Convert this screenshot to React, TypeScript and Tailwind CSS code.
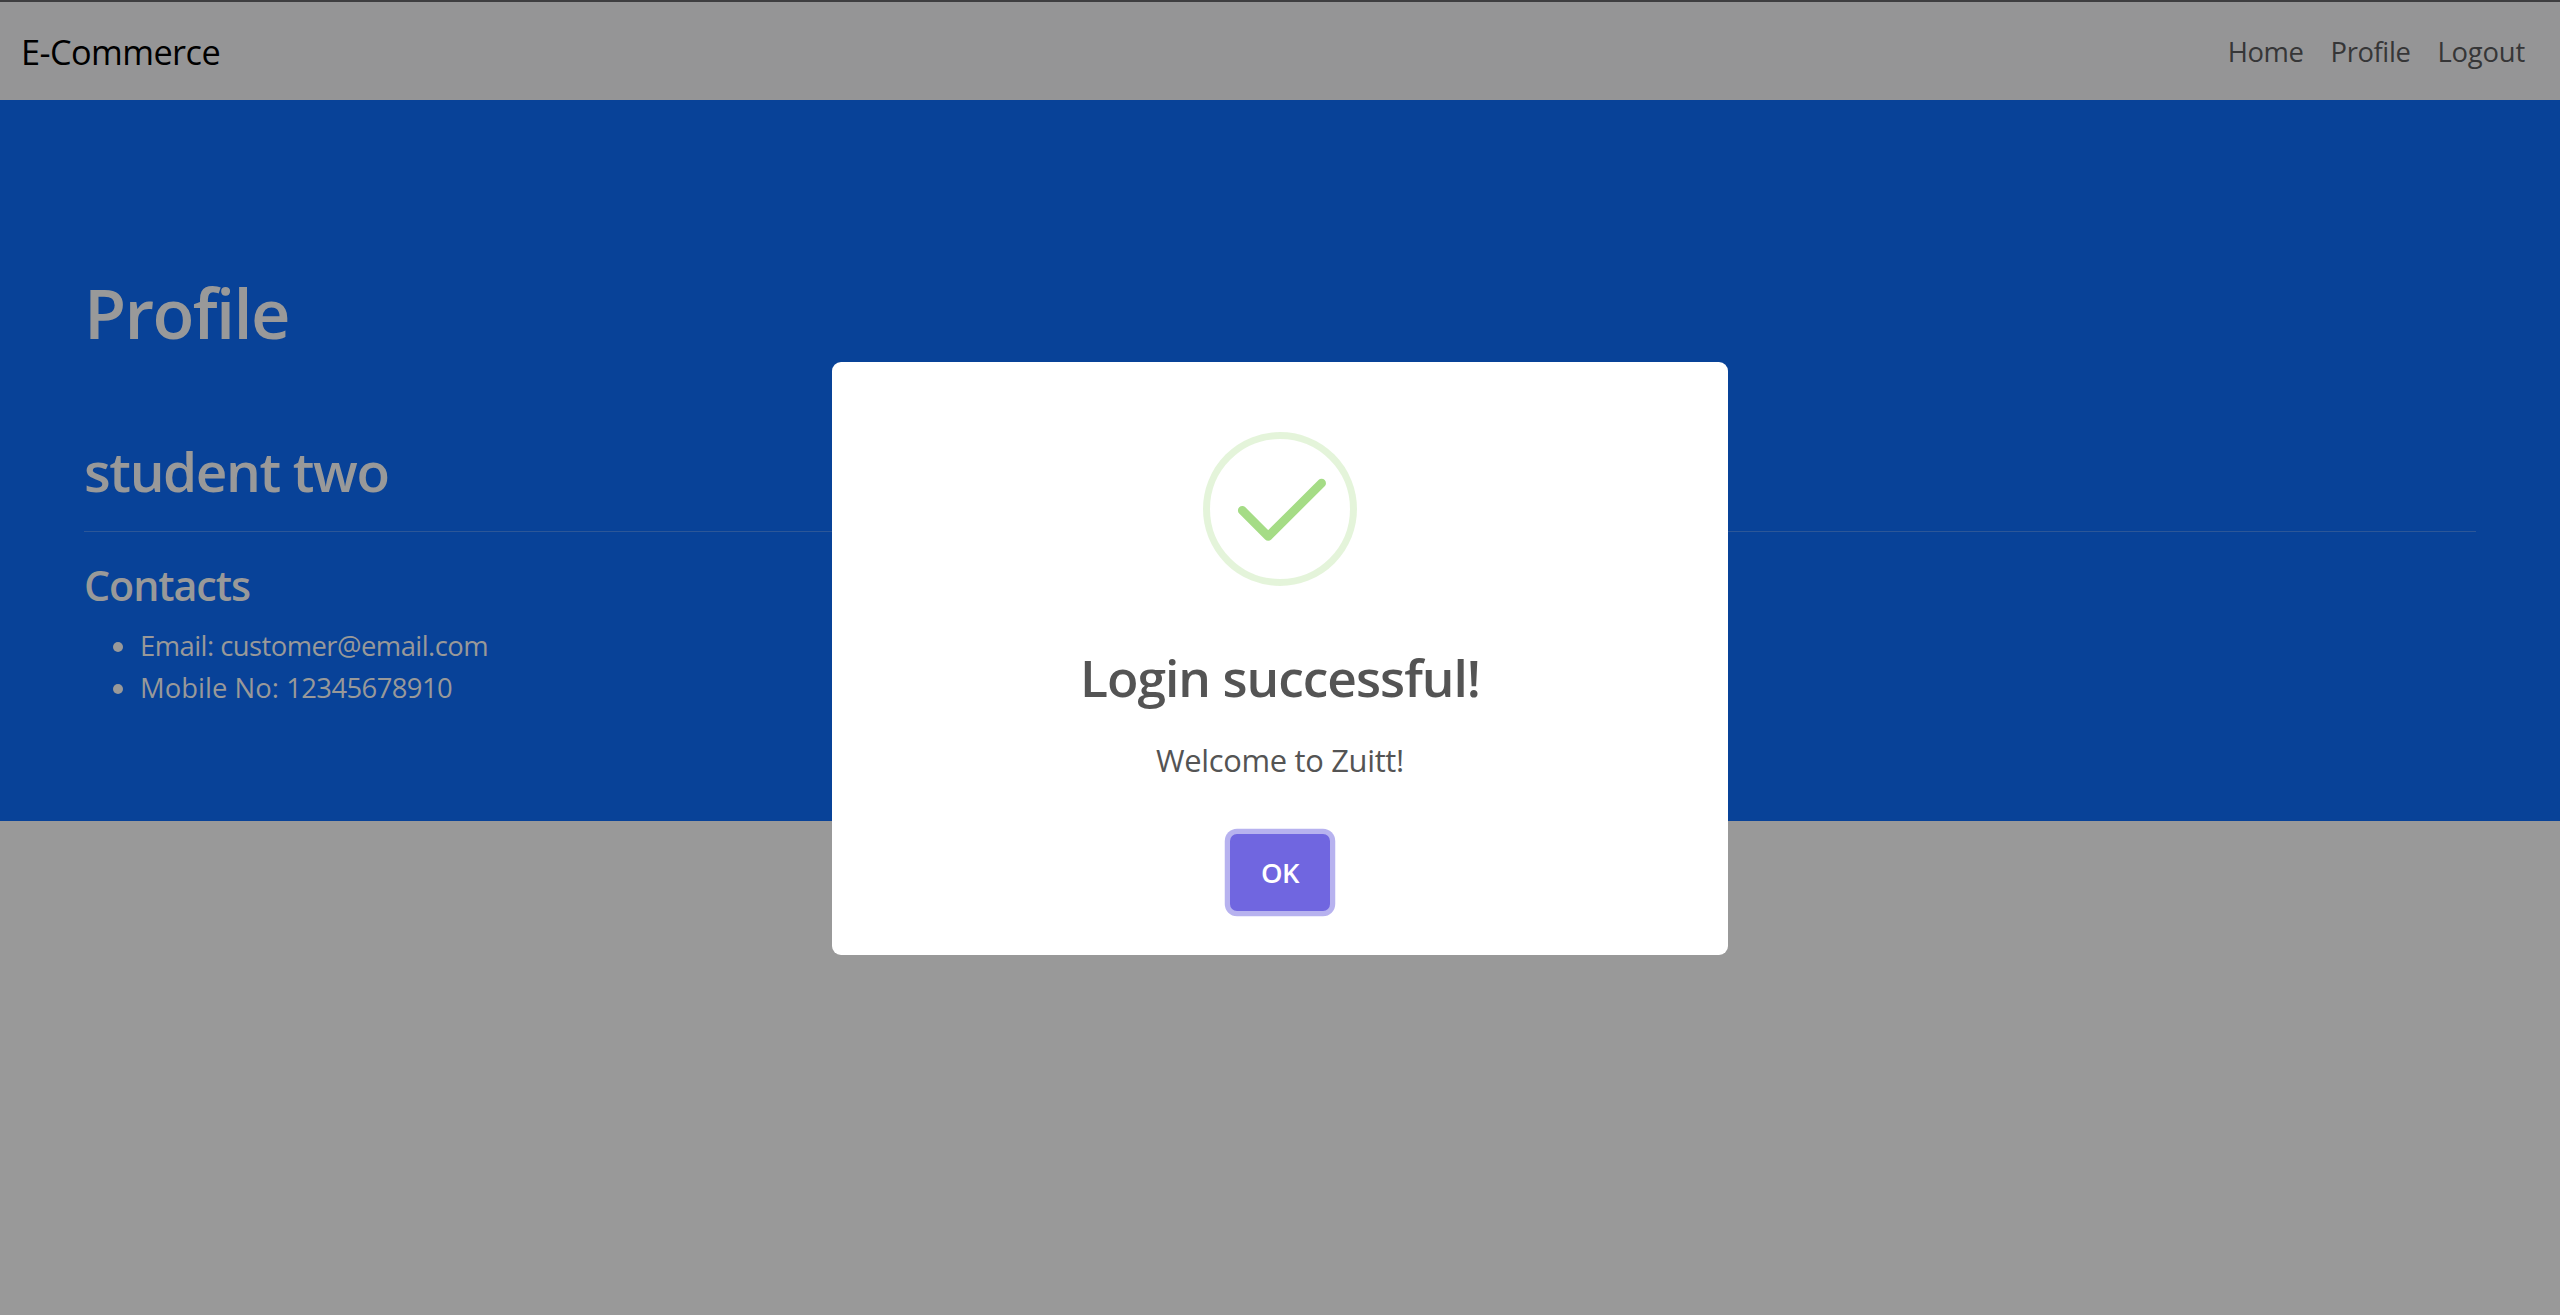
import React from "react";

function Navbar() {
  return (
    <nav className="flex h-[100px] items-center justify-between border-t-2 border-[#3e3e40] bg-[#959596] pt-[2px] pr-[35px] pl-[21px]">
      <a className="text-[34.3px] tracking-[-0.57px] text-black">E-Commerce</a>
      <div className="flex gap-[27px] text-[27.4px] text-[#363637]">
        <a className="tracking-[-0.38px]">Home</a>
        <a className="tracking-[-0.4px]">Profile</a>
        <a className="tracking-[-0.18px]">Logout</a>
      </div>
    </nav>
  );
}

function ProfileBanner() {
  return (
    <section className="h-[721px] bg-[#084298] px-[84px] pt-[171px] text-[#999999]">
      <h1 className="text-[68.6px] leading-[84px] font-semibold tracking-[-1.6px]">Profile</h1>
      <h2 className="mt-[82px] text-[54.9px] leading-[67px] font-semibold tracking-[-1.4px]">student two</h2>
      <hr className="mt-[27px] border-t border-[#2c5798]" />
      <h4 className="mt-[28px] text-[41.2px] leading-[50px] font-semibold tracking-[-1.05px]">Contacts</h4>
      <ul className="mt-[15px] text-[27.4px] leading-[42px]">
        <li className="flex items-center gap-[17px] pl-[29px]">
          <span className="mt-px size-[10px] rounded-full bg-[#999999]" />
          <span className="tracking-[-0.54px]">Email: customer@email.com</span>
        </li>
        <li className="flex items-center gap-[17px] pl-[29px]">
          <span className="mt-px size-[10px] rounded-full bg-[#999999]" />
          <span className="tracking-[0.05px]">
            Mobile No: <span className="tracking-[-0.58px]">12345678910</span>
          </span>
        </li>
      </ul>
    </section>
  );
}

function SuccessIcon() {
  return (
    <svg className="size-[154px]" viewBox="0 0 154 154" fill="none">
      <circle cx="77" cy="77" r="73.5" stroke="#a5dc86" strokeOpacity="0.3" strokeWidth="7" />
      <path
        d="M39.3 78.4 L65.2 104.3 L118.6 51.2"
        stroke="#a5dc86"
        strokeWidth="8.75"
        strokeLinecap="round"
        strokeLinejoin="round"
      />
    </svg>
  );
}

function LoginDialog() {
  return (
    <div
      role="dialog"
      className="absolute top-[362px] left-[832px] flex h-[593px] w-[896px] flex-col items-center rounded-[9px] bg-white pt-[70px] text-[#545454]"
    >
      <SuccessIcon />
      <h2 className="mt-[59px] text-[51.5px] leading-[64px] font-semibold tracking-[-1px]">Login successful!</h2>
      <p className="mt-[28px] text-[30.9px] leading-[47px] tracking-[-0.32px]">Welcome to Zuitt!</p>
      <button className="mt-[50px] h-[77px] w-[100px] rounded-[7px] bg-[#7066e0] text-[27.4px] font-semibold tracking-[-0.5px] text-white shadow-[0_0_0_5.25px_#b7b2ef]">
        OK
      </button>
    </div>
  );
}

export default function App() {
  return (
    <div className="relative h-[1315px] w-[2560px] overflow-hidden bg-[#999999] font-['Open_Sans','Noto_Sans',sans-serif]">
      <Navbar />
      <ProfileBanner />
      <LoginDialog />
    </div>
  );
}
